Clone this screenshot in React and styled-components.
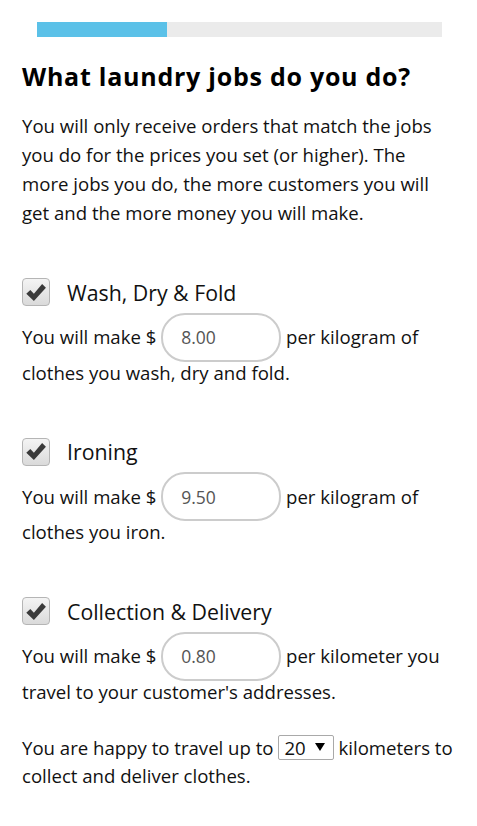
import styled, { createGlobalStyle } from "styled-components";

const GlobalStyle = createGlobalStyle`
  body {
    margin: 0;
    background: #ffffff;
    font-family: "Open Sans", Lato, sans-serif;
    color: #111111;
  }
`;

const jobs = [
  { name: "Wash, Dry & Fold", price: "8.00", unit: "per kilogram of", rest: "clothes you wash, dry and fold." },
  { name: "Ironing", price: "9.50", unit: "per kilogram of", rest: "clothes you iron." },
  { name: "Collection & Delivery", price: "0.80", unit: "per kilometer you", rest: "travel to your customer's addresses." },
];

export default function App() {
  return (
    <Page>
      <GlobalStyle />
      <Track>
        <Fill />
      </Track>
      <Title>What laundry jobs do you do?</Title>
      <Intro>
        You will only receive orders that match the jobs you do for the prices you set (or higher). The
        more jobs you do, the more customers you will get and the more money you will make.
      </Intro>
      {jobs.map((job) => (
        <Job key={job.name}>
          <CheckRow>
            <CheckBox>
              <svg width="22" height="19" viewBox="0 0 20 18">
                <path d="M0.8 10.2 L4.6 6.6 L8 10.2 L15.8 1 L19.4 4.4 L8 17 Z" fill="#3a3a3a" />
              </svg>
            </CheckBox>
            <JobName>{job.name}</JobName>
          </CheckRow>
          <Text>
            You will make ${" "}
            <PriceInput defaultValue={job.price} /> {job.unit} {job.rest}
          </Text>
        </Job>
      ))}
      <Distance>
        You are happy to travel up to{" "}
        <Select>
          20 <Arrow />
        </Select>{" "}
        kilometers to collect and deliver clothes.
      </Distance>
    </Page>
  );
}

const Page = styled.div`
  width: 433px;
  padding: 22px 22px 40px;
`;
const Track = styled.div`
  width: 405px;
  height: 15px;
  margin-left: 15px;
  background: #ebebeb;
`;
const Fill = styled.div`
  width: 130px;
  height: 100%;
  background: #5bc1e8;
`;
const Title = styled.h1`
  margin: 24px 0 0;
  font-size: 25px;
  letter-spacing: 0.75px;
  line-height: 30px;
  font-weight: 700;
  color: #000000;
`;
const Intro = styled.p`
  margin: 20px 0 51px;
  font-size: 18.6px;
  line-height: 29px;
`;
const Job = styled.div`
  margin-top: 48px;
`;
const CheckRow = styled.div`
  display: flex;
  align-items: center;
  gap: 17px;
  height: 28px;
`;
const CheckBox = styled.span`
  box-sizing: border-box;
  width: 28px;
  height: 28px;
  border: 1px solid #b5b5b5;
  border-radius: 4px;
  background: linear-gradient(#f4f4f4, #dadada);
  display: flex;
  align-items: center;
  justify-content: center;
`;
const JobName = styled.span`
  font-size: 21.3px;
`;
const Text = styled.p`
  margin: 13px 0 0;
  font-size: 18.6px;
  line-height: 35px;
`;
const PriceInput = styled.input`
  box-sizing: border-box;
  width: 120px;
  height: 49px;
  margin: -7px 0;
  border: 2px solid #cccccc;
  border-radius: 24px;
  padding: 0 0 0 18px;
  font-family: "Open Sans", sans-serif;
  font-size: 17.5px;
  color: #555555;
  outline: none;
`;
const Distance = styled.p`
  margin: 25px 0 0;
  font-size: 18.6px;
  line-height: 28px;
`;
const Select = styled.span`
  display: inline-flex;
  align-items: center;
  gap: 9px;
  box-sizing: border-box;
  height: 25px;
  padding: 0 8px 0 5px;
  border: 1px solid #a9a9a9;
  border-radius: 2px;
  line-height: 23px;
`;
const Arrow = styled.span`
  width: 0;
  height: 0;
  border-left: 5px solid transparent;
  border-right: 5px solid transparent;
  border-top: 8px solid #000000;
`;
